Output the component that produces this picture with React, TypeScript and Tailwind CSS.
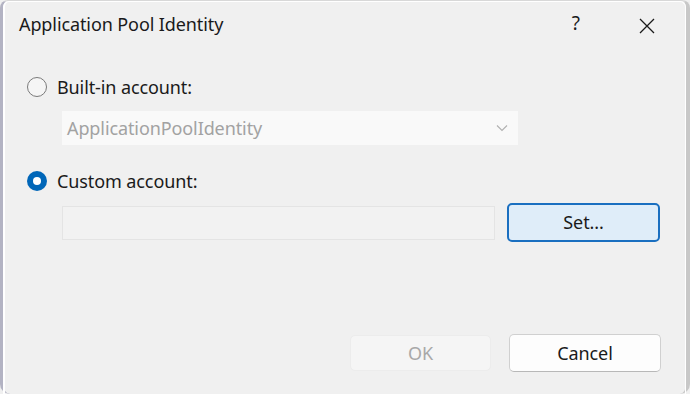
import React from "react";

const font = { fontFamily: '"Noto Sans", "Open Sans", sans-serif' };

const App = () => {
  return (
    <div className="w-[690px] h-[394px] bg-[#f0f0f0] overflow-hidden" style={font}>
      <div className="relative w-[690px] h-[394px] bg-[#f0f0f0] border-l-[3px] border-r-[4px] border-t-[1px] border-l-[#b3b3c3] border-r-[#c8c8c8] border-t-[#d8d8d8] rounded-tl-[8px] rounded-tr-[8px] rounded-bl-[10px] rounded-br-[10px]">
        <div className="flex flex-col h-full border-l-[2px] border-l-white border-r-[1px] border-r-white border-t-[1px] border-t-white rounded-tl-[6px] rounded-tr-[6px]">
          {/* title bar */}
          <div className="flex items-center h-[46px] pl-[14px] text-[#1a1a1a]">
            <span className="text-[18px] tracking-[-0.1px] mt-[-2px]">Application Pool Identity</span>
            <span className="ml-auto text-[19px] mr-[59px] mt-[-4px]">?</span>
            <svg width="16" height="16" viewBox="0 0 16 16" className="mr-[30px] mt-[2px]">
              <path d="M1 1 L15 15 M15 1 L1 15" stroke="#1a1a1a" strokeWidth="1.3" fill="none" />
            </svg>
          </div>

          {/* body */}
          <div className="flex flex-col pl-[22px] pr-[24px]">
            <label className="flex items-center gap-[10px] mt-[28px] h-[22px]">
              <span className="w-[20px] h-[20px] rounded-full border-[1.5px] border-[#7a7a7a] bg-[#f5f5f5]" />
              <span className="text-[18px] tracking-[-0.1px] text-[#1a1a1a]">Built-in account:</span>
            </label>
            <div className="ml-[35px] mt-[13px] w-[456px] h-[34px] bg-[#f9f9f9] flex items-center pl-[5px] pr-[10px]">
              <span className="text-[18px] tracking-[-0.1px] text-[#a2a2a2]">ApplicationPoolIdentity</span>
              <svg width="12" height="8" viewBox="0 0 12 8" className="ml-auto">
                <path d="M1 1.5 L6 6.5 L11 1.5" stroke="#b0b0b0" strokeWidth="1.1" fill="none" />
              </svg>
            </div>

            <label className="flex items-center gap-[10px] mt-[25px] h-[22px]">
              <span className="w-[20px] h-[20px] rounded-full bg-[#0066b8] flex items-center justify-center">
                <span className="w-[8px] h-[8px] rounded-full bg-white" />
              </span>
              <span className="text-[18px] tracking-[-0.1px] text-[#1a1a1a]">Custom account:</span>
            </label>
            <div className="flex items-center mt-[11px] ml-[35px]">
              <div className="w-[433px] h-[34px] bg-[#f2f2f2] border border-[#e4e4e4]" />
              <button className="ml-[12px] w-[153px] h-[39px] rounded-[5px] border-[2px] border-[#1a6fc0] bg-[#dfedf9] text-[18px] text-[#1a1a1a] tracking-[-0.1px]">
                Set...
              </button>
            </div>
          </div>

          <div className="flex justify-end items-center mt-auto mb-[22px] pr-[24px] gap-[18px]">
            <button className="w-[141px] h-[36px] rounded-[5px] bg-[#f5f5f5] border border-[#ececec] text-[18px] text-[#a8a8a8]">
              OK
            </button>
            <button className="w-[152px] h-[38px] rounded-[5px] bg-[#fdfdfd] border border-[#d0d0d0] border-b-[#b8b8b8] text-[18px] text-[#1a1a1a] tracking-[-0.1px]">
              Cancel
            </button>
          </div>
        </div>
      </div>
    </div>
  );
};

export default App;
